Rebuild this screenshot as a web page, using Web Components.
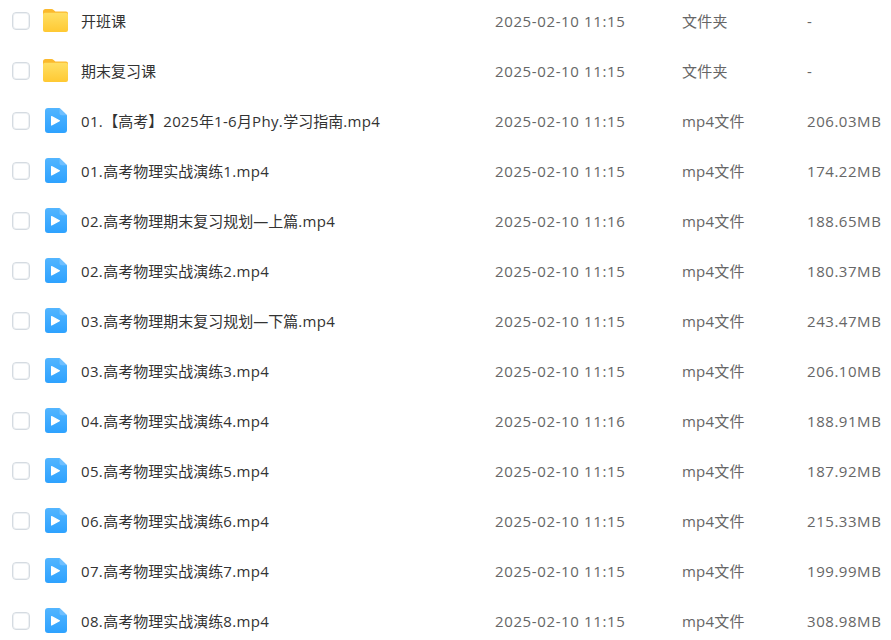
<!DOCTYPE html>
<html>
<head>
<meta charset="utf-8">
<style>
  html, body { margin: 0; padding: 0; background: #fff; overflow: hidden; height: 640px; }
  body { font-family: "Open Sans", "Noto Sans CJK SC", sans-serif; }
</style>
</head>
<body>
<file-list></file-list>

<script>
const folderIcon = `
  <svg width="25" height="23" viewBox="0 0 25 23">
    <defs>
      <linearGradient id="fg" x1="0" y1="0" x2="0" y2="1">
        <stop offset="0" stop-color="#ffdf63"/>
        <stop offset="1" stop-color="#ffc933"/>
      </linearGradient>
    </defs>
    <path d="M0 5V2.5C0 1 1 0 2.5 0h6c.9 0 1.5.3 2.1.9L12.4 2.6H23c1.2 0 2 .8 2 2V7H0z" fill="#fbb92d"/>
    <rect x="0" y="3.8" width="25" height="19.2" rx="2" fill="url(#fg)"/>
  </svg>`;

const videoIcon = `
  <svg width="22" height="25" viewBox="0 0 22 25">
    <defs>
      <linearGradient id="vg" x1="0" y1="0" x2="0" y2="1">
        <stop offset="0" stop-color="#52b5ff"/>
        <stop offset="1" stop-color="#2ea2ff"/>
      </linearGradient>
    </defs>
    <path d="M3 0h11.5L22 7.2V22a3 3 0 0 1-3 3H3a3 3 0 0 1-3-3V3a3 3 0 0 1 3-3z" fill="url(#vg)"/>
    <path d="M14.5 0L22 7.2h-5a2.5 2.5 0 0 1-2.5-2.5z" fill="#6fbfff"/>
    <path d="M6.6 8.6L14.4 12.8 6.6 17z" fill="#fff" stroke="#fff" stroke-width="1.2" stroke-linejoin="round"/>
  </svg>`;

const rowTemplate = document.createElement('template');
rowTemplate.innerHTML = `
  <style>
    :host {
      display: grid;
      grid-template-columns: 18px 51px 414px 187px 125px 1fr;
      align-items: center;
      height: 50px;
      padding-left: 12px;
      box-sizing: border-box;
      font-size: 15px;
      line-height: 20px;
      color: #666;
    }
    .check {
      width: 18px;
      height: 18px;
      box-sizing: border-box;
      border: 1px solid #d5dbe1;
      border-radius: 4px;
      background: #fff;
      box-shadow: inset 0 0 0 1px #eef1f4;
    }
    .icon {
      display: flex;
      justify-content: center;
      width: 25px;
      margin-left: 13px;
      margin-top: -1px;
    }
    svg { display: block; }
    .name {
      color: #333;
      white-space: nowrap;
      margin-top: -1px;
    }
    .name span { letter-spacing: 0.36px; }
    .cell { white-space: nowrap; margin-top: -1px; }
    .date { letter-spacing: 0.62px; }
    .type { letter-spacing: 0.2px; }
    .size { letter-spacing: 0.55px; }
  </style>
  <div class="check"></div>
  <div class="icon"></div>
  <div class="name"></div>
  <div class="cell date"></div>
  <div class="cell type"></div>
  <div class="cell size"></div>
`;

class FileRow extends HTMLElement {
  constructor() {
    super();
    this.attachShadow({ mode: 'open' });
    this.shadowRoot.appendChild(rowTemplate.content.cloneNode(true));
  }

  connectedCallback() {
    const root = this.shadowRoot;
    const isFolder = this.getAttribute('kind') === 'folder';
    root.querySelector('.icon').innerHTML = isFolder ? folderIcon : videoIcon;
    this.renderName(root.querySelector('.name'), this.getAttribute('name'));
    root.querySelector('.date').textContent = this.getAttribute('date');
    root.querySelector('.type').textContent = isFolder ? '文件夹' : 'mp4文件';
    root.querySelector('.size').textContent = this.getAttribute('size');
  }

  // latin runs get a little extra spacing, the CJK ones stay on their em grid
  renderName(nameElement, name) {
    name.split(/([\x20-\x7e]+)/).forEach((part, index) => {
      if (!part) return;
      if (index % 2) {
        const span = document.createElement('span');
        span.textContent = part;
        nameElement.appendChild(span);
      } else {
        nameElement.appendChild(document.createTextNode(part));
      }
    });
  }
}
customElements.define('file-row', FileRow);

const files = [
  ['folder', '开班课', '11:15', '-'],
  ['folder', '期末复习课', '11:15', '-'],
  ['video', '01.【高考】2025年1-6月Phy.学习指南.mp4', '11:15', '206.03MB'],
  ['video', '01.高考物理实战演练1.mp4', '11:15', '174.22MB'],
  ['video', '02.高考物理期末复习规划—上篇.mp4', '11:16', '188.65MB'],
  ['video', '02.高考物理实战演练2.mp4', '11:15', '180.37MB'],
  ['video', '03.高考物理期末复习规划—下篇.mp4', '11:15', '243.47MB'],
  ['video', '03.高考物理实战演练3.mp4', '11:15', '206.10MB'],
  ['video', '04.高考物理实战演练4.mp4', '11:16', '188.91MB'],
  ['video', '05.高考物理实战演练5.mp4', '11:15', '187.92MB'],
  ['video', '06.高考物理实战演练6.mp4', '11:15', '215.33MB'],
  ['video', '07.高考物理实战演练7.mp4', '11:15', '199.99MB'],
  ['video', '08.高考物理实战演练8.mp4', '11:15', '308.98MB'],
];

class FileList extends HTMLElement {
  constructor() {
    super();
    this.attachShadow({ mode: 'open' });
    this.shadowRoot.innerHTML = `
      <style>
        :host { display: block; margin-top: -4px; }
      </style>
      <slot></slot>
    `;
  }

  connectedCallback() {
    files.forEach(([kind, name, time, size]) => {
      const row = document.createElement('file-row');
      row.setAttribute('kind', kind);
      row.setAttribute('name', name);
      row.setAttribute('date', '2025-02-10 ' + time);
      row.setAttribute('size', size);
      this.appendChild(row);
    });
  }
}
customElements.define('file-list', FileList);
</script>
</body>
</html>
